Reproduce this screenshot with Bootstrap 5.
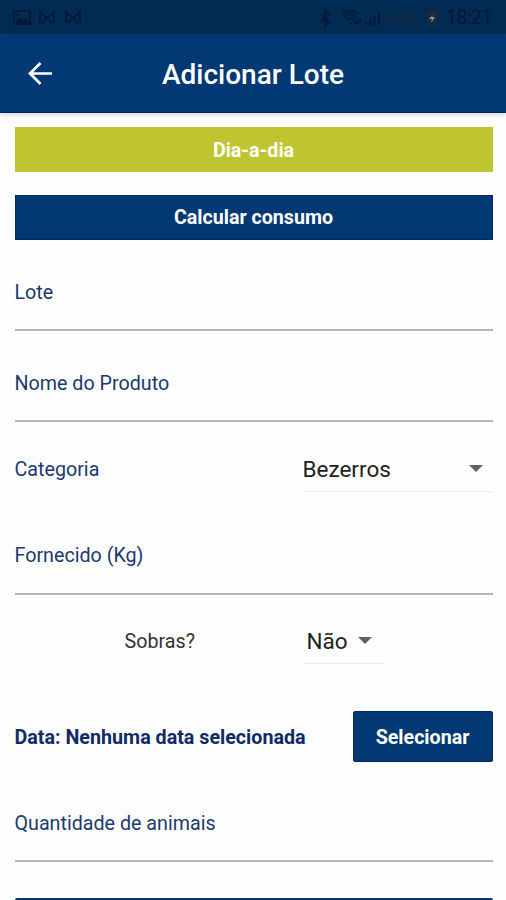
<!DOCTYPE html>
<html lang="pt-BR">
<head>
<meta charset="utf-8">
<meta name="viewport" content="width=device-width, initial-scale=1">
<title>Adicionar Lote</title>
<link href="https://cdn.jsdelivr.net/npm/bootstrap@5.3.0/dist/css/bootstrap.min.css" rel="stylesheet">
<style>
:root { --navy: #023873; }
body { font-family: Roboto, sans-serif; font-size: 19.700px; line-height: 24px; color: #1b3a70; background: #fefefe; height: 900px; overflow: hidden; }
.status { height: 34px; background: #012b52; color: #011a38; padding: 1px 14px 0 12px; }
.status .clock { font-size: 19.500px; letter-spacing: -.5px; padding-top: 1px; }
.status .charge { font-size: 17px; color: #1b2a40; }
.topbar { height: 79px; background: var(--navy); border-bottom: 1px solid #052660; box-shadow: 0 2px 5px rgba(0,0,0,.16); display: grid; grid-template-columns: 80px 1fr 80px; }
.topbar h1 { font-size: 28px; line-height: 32px; padding-top: 3px; }
.page { height: 787px; overflow: hidden; padding: 14px 13.5px 0 14.5px; }
.page > * { flex-shrink: 0; }
.bar-btn { height: 45px; border: 0; border-radius: 0; padding: 2px 0 0; font-size: 19.650px; font-weight: 700; color: #fff; }
.bg-lime { background: #bfc530; }
.bg-navy { background: var(--navy); }
.bar-btn.bg-navy { border: 1px solid #032a68; }
.gap-bar { margin-top: 22.5px; }
.entry { height: 91px; padding-bottom: 24px; border-bottom: 2px solid #b5b6b6; }
.category { height: 82px; padding-bottom: 12px; }
.category .caption { padding-bottom: 10px; }
.picker { border-bottom: 1px solid #ececec; font-size: 22.5px; line-height: 44px; color: #222; }
.picker-wide { width: 190px; padding-right: 10px; }
.picker-short { width: 81px; padding: 0 12px 0 4px; }
.supplied { padding-bottom: 25px; }
.leftovers { height: 95px; padding: 0 109px 0 110px; }
.leftovers .picker { margin-top: 24px; }
.leftovers .caption { color: #333; padding-top: 35px; }
.date-row { height: 96px; padding-bottom: 2px; }
.date-row strong { color: #102b65; padding-top: 2px; }
.choose { width: 140px; height: 51px; border: 1px solid #032a68; border-radius: 2px; padding: 3px 0 0; font-size: 19.650px; font-weight: 700; color: #fff; }
.quantity { height: 76px; }
.save { height: 48px; margin-top: 36px; border-radius: 2px; }
</style>
</head>
<body>
<div class="status d-flex justify-content-between align-items-center">
  <svg width="72" height="20" viewBox="0 0 72 20" fill="none" stroke="currentColor">
    <rect x="2" y="3" width="16" height="13" rx="1.5" stroke-width="2"/>
    <path d="M4 14l4-5 3 3 2-2 4 4v1H4z" fill="currentColor" stroke="none"/><circle cx="6.500" cy="6.500" r="1.300" fill="currentColor" stroke="none"/>
    <path d="M28 15V4l7 6 7-6v11M30 15l5-5 5 5M54 15V4l7 6 7-6v11M56 15l5-5 5 5" stroke-width="1.800"/>
  </svg>
  <div class="d-flex align-items-center">
    <svg width="67" height="22" viewBox="0 0 67 22" fill="none" stroke="currentColor">
      <path d="M2 7l8 8-4 4V3l4 4-8 8" stroke-width="2"/>
      <path d="M23 7q8-6 16 0M25 10q6-5 12 0M27.500 13q3.500-3 7 0M30 16h2" stroke-width="1.800"/>
      <path d="M37 12v5m-2-2l2 2 2-2M41 17v-5m-1.500 2l1.500-2 1.500 2" stroke-width="1.200"/>
      <path d="M47.500 18v-3M51.500 18v-6M55.500 18V9M60 18V5" stroke-width="2"/>
    </svg>
    <span class="charge">49%</span>
    <svg class="ms-2 me-2" width="12" height="20" viewBox="0 0 12 20"><path d="M4 2h4v2h3v14H1V4h3z" fill="#1b2a40"/><path d="M7 7L3 11h3l-1 4 4-6H6z" fill="#8c9aa7"/></svg>
    <span class="clock">18:21</span>
  </div>
</div>
<header class="topbar align-items-center text-white">
  <svg class="mx-auto" width="26" height="26" viewBox="0 0 26 26" fill="none" stroke="#fff" stroke-width="2.700"><path d="M13.500 3L3 13.500 13.500 24M3 13.500H25"/></svg>
  <h1 class="m-0 fw-medium text-center">Adicionar Lote</h1>
</header>
<main class="page d-flex flex-column">
  <button class="btn bar-btn bg-lime w-100">Dia-a-dia</button>
  <button class="btn bar-btn bg-navy w-100 gap-bar">Calcular consumo</button>
  <div class="entry d-flex align-items-end"><span>Lote</span></div>
  <div class="entry d-flex align-items-end"><span>Nome do Produto</span></div>
  <div class="category d-flex align-items-end justify-content-between">
    <span class="caption">Categoria</span>
    <div class="picker picker-wide d-flex align-items-center justify-content-between">Bezerros
      <svg width="14" height="7" viewBox="0 0 14 7"><path d="M0 0h14L7 7z" fill="#616161"/></svg></div>
  </div>
  <div class="entry supplied d-flex align-items-end"><span>Fornecido (Kg)</span></div>
  <div class="leftovers d-flex align-items-start justify-content-between">
    <span class="caption">Sobras?</span>
    <div class="picker picker-short d-flex align-items-center justify-content-between">Não
      <svg width="14" height="7" viewBox="0 0 14 7"><path d="M0 0h14L7 7z" fill="#616161"/></svg></div>
  </div>
  <div class="date-row d-flex align-items-center justify-content-between">
    <strong>Data: Nenhuma data selecionada</strong>
    <button class="btn choose bg-navy">Selecionar</button>
  </div>
  <div class="entry quantity d-flex align-items-end"><span>Quantidade de animais</span></div>
  <div class="save bg-navy"></div>
</main>
<script src="https://cdn.jsdelivr.net/npm/bootstrap@5.3.0/dist/js/bootstrap.bundle.min.js"></script>
</body>
</html>
